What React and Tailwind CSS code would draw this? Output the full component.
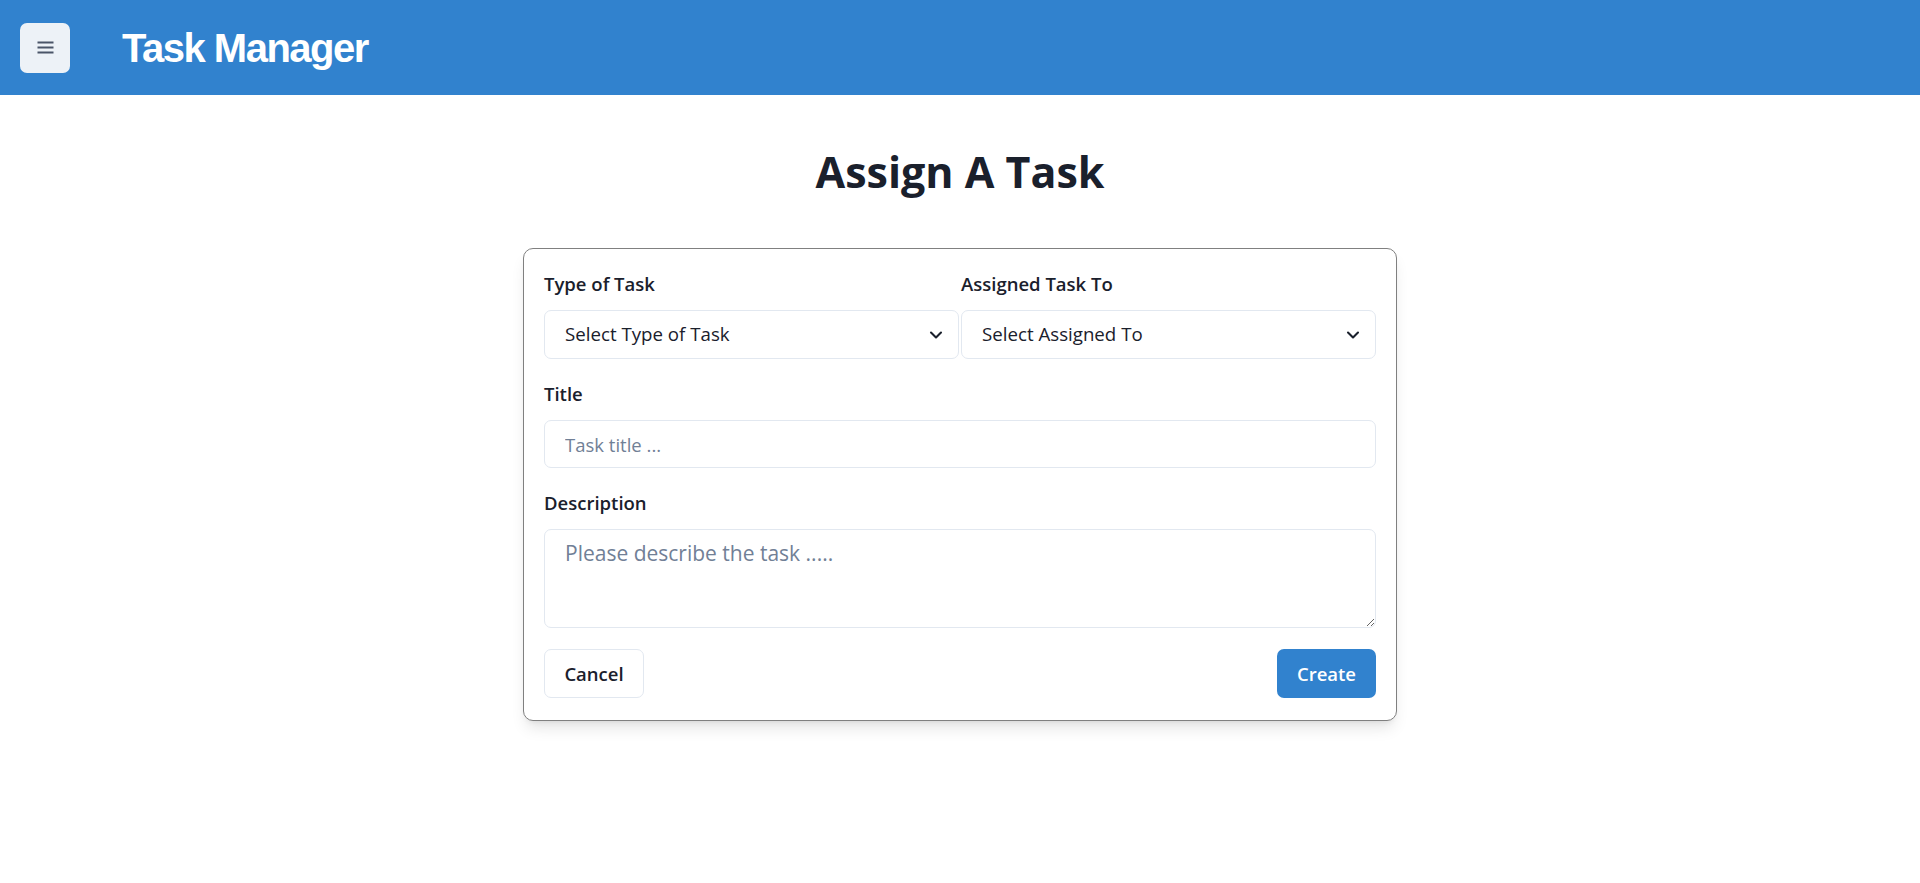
import { ChevronDown } from 'lucide-react';

const sans = { fontFamily: '"Open Sans", "Noto Sans", sans-serif' };

function Field({ label, children }) {
  return (
    <div className="flex flex-col">
      <label className="text-[18.5px] leading-[28px] font-semibold text-[#1A202C] mb-[12px]">{label}</label>
      {children}
    </div>
  );
}

function Select({ placeholder }) {
  return (
    <div className="relative">
      <select
        defaultValue=""
        className="appearance-none w-full h-[49px] rounded-[7px] border border-[#E2E8F0] bg-white pl-5 pr-12 text-[18.7px] text-[#1A202C] outline-none"
      >
        <option value="" disabled>
          {placeholder}
        </option>
      </select>
      <ChevronDown
        className="pointer-events-none absolute right-[13px] top-1/2 -translate-y-1/2 h-5 w-5 text-[#1A202C]"
        strokeWidth={2.5}
      />
    </div>
  );
}

export default function App() {
  return (
    <div className="min-h-screen bg-white" style={sans}>
      <header className="h-[95px] bg-[#3182CE] flex items-center pl-5">
        <button className="w-[50px] h-[50px] rounded-[7px] bg-[#EDF2F7] flex items-center justify-center">
          <svg width="17" height="13" viewBox="0 0 17 13" fill="none" stroke="#4A5568" strokeWidth="1.8">
            <path d="M0.5 1.5h16M0.5 6.5h16M0.5 11.5h16" />
          </svg>
        </button>
        <h1
          className="ml-[52px] text-white font-bold text-[40px] leading-none tracking-[-1.5px]"
          style={{ fontFamily: '"Liberation Sans", Arial, sans-serif' }}
        >
          Task Manager
        </h1>
      </header>

      <main className="flex flex-col items-center">
        <h2 className="mt-[51px] mb-[50px] text-[43px] leading-[52px] font-bold text-[#1A202C]">Assign A Task</h2>

        <div className="w-[874px] rounded-[10px] border border-[#808080] bg-white px-5 pt-[21px] pb-[22px] shadow-lg">
          <div className="grid grid-cols-2 gap-x-[2px]">
            <Field label="Type of Task">
              <Select placeholder="Select Type of Task" />
            </Field>
            <Field label="Assigned Task To">
              <Select placeholder="Select Assigned To" />
            </Field>
          </div>

          <div className="mt-[21px]">
            <Field label="Title">
              <input
                placeholder="Task title ..."
                className="w-full h-12 rounded-[7px] border border-[#E2E8F0] pl-5 text-[18.5px] text-[#1A202C] placeholder:text-[#718096] outline-none"
              />
            </Field>
          </div>

          <div className="mt-[21px]">
            <Field label="Description">
              <textarea
                placeholder="Please describe the task ....."
                className="block w-full h-[99px] rounded-[7px] border border-[#E2E8F0] px-5 pt-[6px] text-[21px] leading-[34px] text-[#1A202C] placeholder:text-[#718096] outline-none"
              />
            </Field>
          </div>

          <div className="mt-[21px] flex items-center justify-between">
            <button className="w-[100px] h-[49px] rounded-[7px] border border-[#E2E8F0] bg-white text-[18.5px] font-semibold text-[#1A202C]">
              Cancel
            </button>
            <button className="w-[99px] h-[49px] rounded-[7px] bg-[#3182CE] text-[18.5px] font-semibold text-white">
              Create
            </button>
          </div>
        </div>
      </main>
    </div>
  );
}
